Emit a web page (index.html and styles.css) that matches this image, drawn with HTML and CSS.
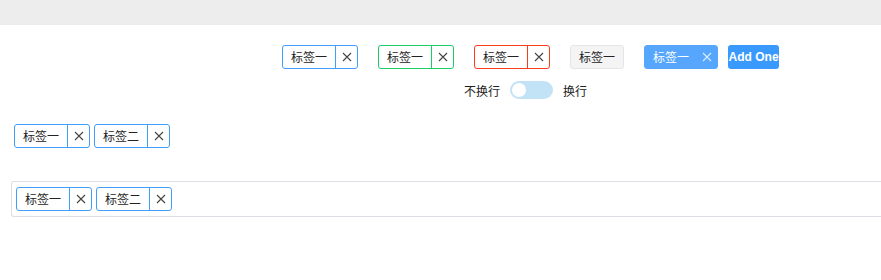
FILE: index.html
```html
<!DOCTYPE html>
<html lang="zh">
<head>
<meta charset="UTF-8" />
<title>标签</title>
<link rel="stylesheet" href="styles.css">
</head>
<body>

<div class="topbar"></div>

<!-- 各种颜色的标签 -->
<div class="tag-row">
  <span class="tag tag-blue"><span class="tag-text">标签一</span><span class="tag-close"><svg viewBox="0 0 10 10"><path d="M1 1L9 9M9 1L1 9"/></svg></span></span>
  <span class="tag tag-green"><span class="tag-text">标签一</span><span class="tag-close"><svg viewBox="0 0 10 10"><path d="M1 1L9 9M9 1L1 9"/></svg></span></span>
  <span class="tag tag-red"><span class="tag-text">标签一</span><span class="tag-close"><svg viewBox="0 0 10 10"><path d="M1 1L9 9M9 1L1 9"/></svg></span></span>
  <span class="tag tag-gray"><span class="tag-text">标签一</span></span>
  <span class="tag tag-fill"><span class="tag-text">标签一</span><span class="tag-close"><svg viewBox="0 0 10 10"><path d="M1 1L9 9M9 1L1 9"/></svg></span></span>
  <button class="btn-add">Add One</button>
</div>

<!-- 换行开关 -->
<div class="switch-row">
  <span>不换行</span>
  <span class="switch"><span class="switch-knob"></span></span>
  <span>换行</span>
</div>

<div class="tag-list">
  <span class="tag tag-blue"><span class="tag-text">标签一</span><span class="tag-close"><svg viewBox="0 0 10 10"><path d="M1 1L9 9M9 1L1 9"/></svg></span></span>
  <span class="tag tag-blue"><span class="tag-text">标签二</span><span class="tag-close"><svg viewBox="0 0 10 10"><path d="M1 1L9 9M9 1L1 9"/></svg></span></span>
</div>

<div class="tag-input">
  <span class="tag tag-blue"><span class="tag-text">标签一</span><span class="tag-close"><svg viewBox="0 0 10 10"><path d="M1 1L9 9M9 1L1 9"/></svg></span></span>
  <span class="tag tag-blue"><span class="tag-text">标签二</span><span class="tag-close"><svg viewBox="0 0 10 10"><path d="M1 1L9 9M9 1L1 9"/></svg></span></span>
</div>

</body>
</html>
```

FILE: styles.css
```css
body {
  margin: 0;
  font-family: "Noto Sans CJK SC", "Liberation Sans", sans-serif;
  font-size: 12px;
  color: #222;
  background: #fff;
}

.topbar {
  height: 25px;
  background-color: #ededed;
}

/* Первый ряд */
.tag-row {
  display: flex;
  align-items: center;
  gap: 20px;
  margin: 20px 0 0 282px;
}

.tag {
  display: inline-flex;
  align-items: stretch;
  height: 24px;
  box-sizing: border-box;
  border: 1px solid #409eff;
  border-radius: 3px;
  line-height: 22px;
  background: #fff;
}

.tag-text {
  padding: 0 8px;
}

.tag-close {
  display: flex;
  align-items: center;
  justify-content: center;
  width: 21px;
  border-left: 1px solid #409eff;
}

.tag-close svg {
  width: 10px;
  height: 10px;
  stroke: #444;
  stroke-width: 1.1;
  fill: none;
}

.tag-green,
.tag-green .tag-close {
  border-color: #1ccb6a;
}

.tag-red,
.tag-red .tag-close {
  border-color: #f83c1a;
}

.tag-gray {
  border-color: #e6e6ea;
  background: #f4f4f5;
}

.tag-fill {
  border-color: #55a6fc;
  background: #55a6fc;
  color: #fff;
}

.tag-fill .tag-close {
  border-left: none;
  width: 20px;
}

.tag-fill .tag-close svg {
  stroke: #dcecff;
}

.btn-add {
  margin-left: -10px;
  height: 24px;
  width: 51px;
  padding: 0;
  border: none;
  border-radius: 3px;
  background: #3a99fc;
  color: #fff;
  font-family: "Liberation Sans", sans-serif;
  font-size: 12px;
  font-weight: bold;
  white-space: nowrap;
}

/* Переключатель */
.switch-row {
  display: flex;
  align-items: center;
  gap: 10px;
  margin: 12px 0 0 464px;
}

.switch {
  display: inline-flex;
  align-items: center;
  width: 43px;
  height: 18px;
  border-radius: 9px;
  background: #c2e3f6;
}

.switch-knob {
  width: 14px;
  height: 14px;
  margin-left: 2px;
  border-radius: 50%;
  background: #fff;
}

/* Второй ряд */
.tag-list {
  display: flex;
  gap: 4px;
  margin: 25px 0 0 14px;
}

.tag-input {
  display: flex;
  gap: 4px;
  margin: 33px 0 0 11px;
  padding: 5px 4px;
  border: 1px solid #dcdfe6;
  border-right: none;
  border-radius: 3px 0 0 3px;
}
```
